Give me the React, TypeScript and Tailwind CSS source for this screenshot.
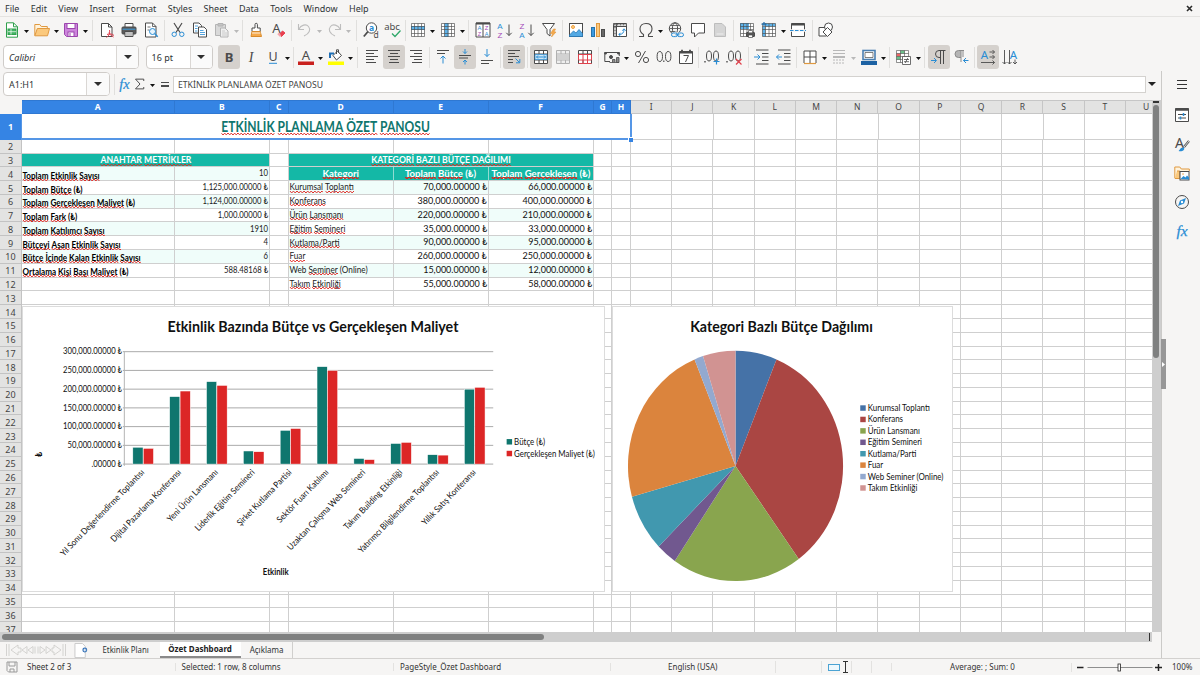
import type { ReactNode } from "react";
import clsx from "clsx";

const ink = "#4b4b4b";
const blue = "#2a8dd4";

/* ---------- toolbar primitives ---------- */

const Ico = ({ children, size = 16 }: { children: ReactNode; size?: number }) => (
  <svg width={size} height={size} viewBox="0 0 16 16" fill="none" stroke={ink} strokeWidth="1" className="shrink-0 overflow-visible">
    {children}
  </svg>
);

const Tool = ({ children, active }: { children: ReactNode; active?: boolean }) => (
  <button className={clsx("flex h-6 w-[22px] shrink-0 items-center justify-center rounded-[3px]", active && "bg-[#d5d1cd]")}>
    <Ico>{children}</Ico>
  </button>
);

const Arrow = ({ className = "w-[7.5px]", dim }: { className?: string; dim?: boolean }) => (
  <span className={clsx("flex shrink-0 items-center justify-center pt-[2px]", className)}>
    <svg width="5" height="3" viewBox="0 0 5 3">
      <path d="M0 0h5L2.5 3z" fill={dim ? "#b9b9b9" : "#111"} />
    </svg>
  </span>
);

const Sep = ({ className = "w-[5px]" }: { className?: string }) => (
  <span className={clsx("flex shrink-0 justify-center", className)}>
    <span className="h-[21px] w-px bg-[#e0dfdd]" />
  </span>
);

const Grid = ({ stroke = ink }: { stroke?: string }) => (
  <path d="M1.5 1.5h13v13h-13zM1.5 4.5h13M1.5 7.5h13M1.5 11.5h13M4.5 1.5v13M8 1.5v13M11.5 1.5v13" stroke={stroke} strokeWidth=".65" />
);

const Letter = ({ x, y, size, fill = ink, bold, tight, children }: { x: number; y: number; size: number; fill?: string; bold?: boolean; tight?: boolean; children: string }) => (
  <text
    x={x}
    y={y}
    fontSize={size}
    fill={fill}
    stroke="none"
    textAnchor="middle"
    fontWeight={bold ? 700 : 400}
    fontFamily={tight ? "Liberation Sans, sans-serif" : "Noto Sans, sans-serif"}
  >
    {children}
  </text>
);

const Lines = ({ rows }: { rows: number[][] }) => (
  <>
    {rows.map(([y, x1, x2]) => (
      <path key={y} d={`M${x1} ${y}H${x2}`} />
    ))}
  </>
);

const Fx = () => (
  <text x="8" y="12.5" textAnchor="middle" fontSize="15.5" fontStyle="italic" fill={blue} stroke={blue} strokeWidth=".25" fontFamily="Liberation Serif, serif">
    fx
  </text>
);

/* ---------- bars above the sheet ---------- */

const menus = ["File", "Edit", "View", "Insert", "Format", "Styles", "Sheet", "Data", "Tools", "Window", "Help"];

const MenuBar = () => (
  <div className="flex h-[17px] shrink-0 items-center border-b border-[#e4e3e1] pl-[5px] pr-[7px]">
    <div className="flex gap-[11.4px]">
      {menus.map((m) => (
        <span key={m}>{m}</span>
      ))}
    </div>
    <svg width="7" height="7" viewBox="0 0 7 7" className="ml-auto">
      <path d="M1 1l5 5M6 1L1 6" stroke="#2b2b2b" strokeWidth="1.6" />
    </svg>
  </div>
);

const StandardBar = () => (
  <div className="flex h-[27px] shrink-0 items-center pb-px pl-px">
    <Tool>
      <path d="M2.5.8h7l4 4v10.4h-11z" stroke="#2fa04c" fill="#fff" />
      <path d="M9.5.8v4h4" stroke="#2fa04c" />
      <rect x="4" y="7" width="8" height="5.5" fill="#43b565" stroke="#2fa04c" />
      <path d="M4 9.7h8M7 7v5.5" stroke="#fff" strokeWidth=".7" />
    </Tool>
    <Arrow />
    <Tool>
      <path d="M.8 13.5v-11h5l1.5 2h6v2" stroke="#e09940" fill="#fff3dc" />
      <path d="M.8 13.8L3.3 6.5h12.2l-2 7.3z" stroke="#e09940" fill="#fbc97d" />
    </Tool>
    <Arrow />
    <Tool>
      <path d="M1.5 1.5h13v13h-11l-2-2z" stroke="#9c46ad" fill="#cd85dc" />
      <rect x="4" y="1.5" width="8" height="5" fill="#fff" stroke="#9c46ad" />
      <rect x="5" y="10" width="6" height="4.5" fill="#fff" stroke="#9c46ad" />
      <path d="M7 11v3" stroke="#9c46ad" />
    </Tool>
    <Arrow />
    <Sep className="w-[6.5px]" />
    <Tool>
      <path d="M2.5 1.5h7L13 5v9.500H2.500z" fill="#fff" />
      <path d="M9.500 1.500V5H13" />
      <path d="M7.500 15.500c3-2 3.500-5 3-7.500M8 12.500c2.500-1 5-1 7 1M10 10.500c1 2.500 2.500 3.500 4.500 4.500" stroke="#e03b4b" />
    </Tool>
    <Tool>
      <path d="M4 5V1.500h8V5" fill="#fff" />
      <rect x="1" y="5" width="14" height="7" rx="1" fill="#5b5b5b" />
      <path d="M1.500 7.200h13" stroke="#3e9fe0" />
      <path d="M4 9.500h8v5H4z" fill="#fff" />
      <path d="M5 11h6M5 13h6" strokeWidth=".7" />
    </Tool>
    <Tool>
      <path d="M2.500 1h7L13 4.500V15H2.500z" fill="#fff" />
      <path d="M9.500 1v3.500H13M4.500 5h3M4.500 8h2" strokeWidth=".8" />
      <circle cx="9.500" cy="9.500" r="3" stroke={blue} fill="#e8f4fc" />
      <path d="M11.800 11.800l3 3" stroke={blue} strokeWidth="1.300" />
    </Tool>
    <Sep />
    <Tool>
      <path d="M4 1l6 9.500M12 1L6 10.500" strokeWidth="1.200" />
      <circle cx="4.200" cy="12.300" r="2.200" stroke={blue} />
      <circle cx="11.800" cy="12.300" r="2.200" stroke={blue} />
    </Tool>
    <Tool>
      <path d="M1.500 1h5.500l2.500 2.500V11h-8z" fill="#fff" />
      <path d="M6.500 5h5.500l2.500 2.500V15h-8z" fill="#fff" />
      <path d="M3 4h3M3 6.500h2.500M3 9h2.500M8 8.500h3.500M8 10.500h5M8 12.500h5" stroke={blue} strokeWidth=".8" />
    </Tool>
    <Tool>
      <path d="M1.500 2.500h10v11h-10z" fill="#d9d9d9" stroke="#b4b4b4" />
      <path d="M4 1.500h5v2.500H4z" fill="#c4c4c4" stroke="#b4b4b4" />
      <path d="M6.500 6h4.500l3 3v6H6.500z" fill="#efefef" stroke="#b4b4b4" />
      <path d="M8 9h3M8 11h5M8 13h5" stroke="#c4c4c4" strokeWidth=".8" />
    </Tool>
    <Arrow className="w-[7px]" dim />
    <Sep />
    <Tool>
      <path d="M7 6V2.500a1.200 1.200 0 012.400 0V6h2.800v3.500H4V6z" fill="#fff" />
      <path d="M4 9.500h8.200l1.300 5H3z" fill="#f5a94b" stroke="#d98b2b" />
      <path d="M4 11h8.500" stroke="#fff" strokeWidth=".8" />
    </Tool>
    <Tool>
      <Letter x={6.500} y={11} size={13}>A</Letter>
      <path d="M9 12.500l3.500-3.500 2.500 2-3.500 3.500z" fill="#e8404f" stroke="#e8404f" />
      <path d="M8 11.500l2.500 2.500" stroke="#f6a5ac" strokeWidth="2" />
    </Tool>
    <Sep className="w-[4.5px]" />
    <Tool>
      <path d="M1.500 2v5.500h5.500M1.800 7.200C4 3 9 1.500 11.500 4.500s1 7-4.500 9.500" stroke="#bdbdbd" strokeWidth="1.100" />
    </Tool>
    <Arrow dim />
    <Tool>
      <path d="M14.500 2v5.500H9M14.200 7.200C12 3 7 1.500 4.500 4.500s-1 7 4.500 9.500" stroke="#bdbdbd" strokeWidth="1.100" />
    </Tool>
    <Arrow dim />
    <Sep className="w-[7px]" />
    <Tool>
      <circle cx="8.500" cy="6" r="5.200" fill="#fff" />
      <path d="M5 9.500L.8 14.500" strokeWidth="1.800" />
      <Letter x={8.500} y={9} size={8.500} fill={blue} bold>a</Letter>
      <Letter x={13} y={15.500} size={8.500}>d</Letter>
    </Tool>
    <Tool>
      <Letter x={7} y={7.500} size={9.500}>abc</Letter>
      <path d="M7 11.500l3 3 5.500-6" stroke="#2fa86a" strokeWidth="1.300" />
    </Tool>
    <Sep className="w-[3.5px]" />
    <Tool>
      <path d="M1.500 1.500h13v13h-13z" fill="#fff" stroke="none" />
      <rect x="1" y="4" width="14" height="4" fill="#5fb3ea" stroke="none" />
      <Grid />
    </Tool>
    <Arrow />
    <Tool>
      <path d="M1.500 1.500h13v13h-13z" fill="#fff" stroke="none" />
      <rect x="4.500" y="1" width="4" height="14" fill="#5fb3ea" stroke="none" />
      <Grid />
    </Tool>
    <Arrow />
    <Sep className="w-[5.5px]" />
    <Tool>
      <path d="M1 1h14v14H1zM8 1v14" fill="#fff" />
      <path d="M1 1.500h14" strokeWidth="2" />
      <Letter x={4.500} y={7.900} size={5.900} fill={blue} tight>A</Letter>
      <Letter x={11.500} y={7.900} size={5.900} fill="#a349b8" tight>Z</Letter>
      <Letter x={4.500} y={14.300} size={5.500} fill="#a349b8" tight>Z</Letter>
      <Letter x={11.500} y={14.300} size={5.500} fill={blue} tight>A</Letter>
    </Tool>
    <Tool>
      <Letter x={3} y={6.500} size={8} fill={blue} tight>A</Letter>
      <Letter x={3} y={15.700} size={8} fill="#a349b8" tight>Z</Letter>
      <path d="M12 2.500v11M9.300 10.800l2.700 2.700 2.700-2.700" />
    </Tool>
    <Tool>
      <Letter x={3} y={6.500} size={8} fill="#a349b8" tight>Z</Letter>
      <Letter x={3} y={15.700} size={8} fill={blue} tight>A</Letter>
      <path d="M12 2.500v11M9.300 10.800l2.700 2.700 2.700-2.700" />
    </Tool>
    <Tool>
      <path d="M1.500 1.500h12l-4.500 6v6.500l-3-2.500v-4z" fill="#fff" />
      <path d="M12.500 7l-3 4.500h2l-1 3.500 4.500-5h-2l1.500-3z" fill="#f5a94b" stroke="#e09940" strokeWidth=".6" />
    </Tool>
    <Sep className="w-[5.5px]" />
    <Tool>
      <rect x="1.500" y="1.500" width="13" height="13" fill="#fff" />
      <circle cx="5" cy="5" r="1.500" stroke="#f0a040" fill="#fbd08a" />
      <path d="M1.500 13l4-4 2.500 2 3-3.500 3.500 4v3h-13z" fill="#53a9e4" stroke="#2778b8" strokeWidth=".8" />
    </Tool>
    <Tool>
      <rect x="1.500" y="5.500" width="3" height="9" fill="#3c9ae0" stroke="#2573ad" />
      <rect x="6.500" y="1.500" width="3" height="13" fill="#fbc97d" stroke="#e09940" />
      <rect x="11.500" y="7.500" width="3" height="7" fill="#686868" />
    </Tool>
    <Tool>
      <path d="M1.500 1.500h13v13h-13zM1.500 4.500h13M4.500 1.500v13" fill="#fff" />
      <path d="M1.500 2.800h13M3 1.500v13" stroke="#777" strokeWidth="1.600" strokeDasharray="2 1" />
      <path d="M7 12.500c3.500 0 5-2 5-5M8.500 10.800L6.800 12.500l1.700 1.700M10.300 8.700L12 6.800l1.700 1.900" stroke={blue} />
    </Tool>
    <Sep className="w-1" />
    <Tool>
      <path d="M1 14.500h4.500v-2C3 11 2 9 2 6.800 2 3.500 4.500 1.500 8 1.500s6 2 6 5.300c0 2.200-1 4.200-3.500 5.700v2H15" strokeWidth="1.100" />
    </Tool>
    <Arrow />
    <Tool>
      <circle cx="7" cy="6.500" r="5.700" />
      <ellipse cx="7" cy="6.500" rx="2.600" ry="5.700" />
      <path d="M1.300 6.500h11.400M2.500 3.500h9M2.500 9.500h5" strokeWidth=".8" />
      <path d="M4 10.500h12v5H4z" fill="#f6f5f4" stroke="none" />
      <rect x="3.500" y="11" width="6" height="3.600" rx="1.800" stroke={blue} />
      <rect x="9.500" y="11" width="6" height="3.600" rx="1.800" stroke={blue} />
      <path d="M7.500 12.800h4" stroke={blue} />
    </Tool>
    <Tool>
      <path d="M1.500 1.500h13v9.500H8.500l-4 4V11h-3z" fill="#fff" />
    </Tool>
    <Tool>
      <path d="M2.500 1.500h7.500l3.500 3.500v9.500h-11z" fill="#d5d5d5" stroke="#bdbdbd" />
      <path d="M4.500 12h7" stroke="#eee" />
    </Tool>
    <Sep className="w-[5.5px]" />
    <Tool>
      <path d="M1.500 1.500h13v13h-13z" fill="#fff" stroke="none" />
      <rect x="1" y="1" width="9" height="6" fill="#5fb3ea" stroke="none" />
      <Grid />
      <rect x="7.500" y="10.500" width="8" height="4" rx=".5" fill="#555" />
      <path d="M9.500 10.500v-2h4v2M9.500 13h4v2.500h-4z" fill="#fff" strokeWidth=".7" />
    </Tool>
    <Tool>
      <path d="M1.500 1.500h13v13h-13z" fill="#fff" stroke="none" />
      <rect x="4.500" y="1.500" width="10" height="3" fill="#5fb3ea" stroke="none" />
      <rect x="1.500" y="5" width="3" height="9.500" fill="#5fb3ea" stroke="none" />
      <Grid />
      <path d="M3 0v4.500M.5 2.200h5" stroke="#1d6fb0" strokeWidth="1.200" />
    </Tool>
    <Arrow className="w-[7px]" />
    <Tool>
      <path d="M1.500 1.500h13v13h-13z" fill="#fff" />
      <path d="M1.500 2.500h13" strokeWidth="2" />
      <path d="M0 8.500h16" stroke="#f6f5f4" strokeWidth="2.500" />
      <path d="M0 8.500h16" stroke={blue} strokeDasharray="3.500 1.500" />
    </Tool>
    <Sep className="w-1.5" />
    <Tool>
      <path d="M1 5.500h7.500v8.500H1z" fill="#fff" />
      <circle cx="10.500" cy="5" r="4" fill="#fff" />
      <path d="M9.500 5.500l4.500 4.500-4.500 4.500L5 10z" fill="#fff" />
    </Tool>
  </div>
);

const Combo = ({ className, boxClass, italic, children }: { className: string; boxClass: string; italic?: boolean; children: string }) => (
  <div className={clsx("flex shrink-0 items-stretch overflow-hidden rounded-[4px] border border-[#cfccc9] bg-white", className)}>
    <span className={clsx("flex flex-1 items-center pl-[5px]", italic && "italic")}>{children}</span>
    <span className={clsx("flex items-center justify-center border-l border-[#dad7d4] bg-[#fafafa]", boxClass)}>
      <svg width="8" height="4" viewBox="0 0 8 4">
        <path d="M0 0h8L4 4z" fill="#2f2f2f" />
      </svg>
    </span>
  </div>
);

const FormatBar = () => (
  <div className="flex h-[27px] shrink-0 items-center pb-px pl-[3px]">
    <Combo className="h-6 w-[136px]" boxClass="w-[22px]" italic>Calibri</Combo>
    <span className="w-[6.5px]" />
    <Combo className="h-6 w-[67px]" boxClass="w-[22px]">16 pt</Combo>
    <span className="w-[5px]" />
    <Tool active><Letter x={8} y={12.5} size={13} bold>B</Letter></Tool>
    <Tool>
      <text x="8" y="12.500" textAnchor="middle" fontSize="14" fontStyle="italic" fill={ink} stroke="none" fontFamily="Liberation Serif, serif">I</text>
    </Tool>
    <Tool>
      <Letter x={8} y={11.5} size={12.5}>U</Letter>
      <path d="M4 14.300h8" stroke={blue} />
    </Tool>
    <Arrow />
    <Sep className="w-1" />
    <Tool>
      <Letter x={8} y={10.5} size={13}>A</Letter>
      <rect x="0" y="12.500" width="16" height="3.500" fill="#c9211e" stroke="none" />
    </Tool>
    <Arrow />
    <Tool>
      <rect x="0" y="12.500" width="16" height="3.500" fill="#ffff00" stroke="none" />
      <path d="M5 6.500l4.500-4.500 4 4.500-5 4.500z" fill="#fff" />
      <path d="M8.500 5V.8h2v3" />
      <path d="M2 9V4.500h4" stroke="#1f6fb5" strokeWidth="2" />
    </Tool>
    <Arrow className="w-2" />
    <Sep className="w-1.5" />
    <Tool><Lines rows={[[1.5, 2, 14], [4.5, 2, 10], [7.5, 2, 14], [10.5, 2, 10], [13.5, 2, 12]]} /></Tool>
    <Tool active><Lines rows={[[1.5, 2, 14], [4.5, 4, 12], [7.5, 2, 14], [10.5, 4, 12], [13.5, 3, 13]]} /></Tool>
    <Tool><Lines rows={[[1.5, 2, 14], [4.5, 6, 14], [7.5, 2, 14], [10.5, 6, 14], [13.5, 4, 14]]} /></Tool>
    <Sep />
    <Tool>
      <Lines rows={[[1.5, 2, 14], [4.5, 2, 10]]} />
      <path d="M8 14.500V7M5.500 9.500L8 7l2.500 2.500" stroke={blue} />
    </Tool>
    <Tool active>
      <Lines rows={[[6.5, 2, 14], [9, 2, 11]]} />
      <path d="M8 0v4.500M6 2.500l2 2 2-2M8 15.500V11M6 13l2-2 2 2" stroke={blue} />
    </Tool>
    <Tool>
      <Lines rows={[[11.5, 2, 14], [14.5, 2, 10]]} />
      <path d="M8 0v7.500M5.500 5L8 7.500 10.500 5" stroke={blue} />
    </Tool>
    <Sep className="w-[5.5px]" />
    <Tool active>
      <Lines rows={[[1.5, 2, 14], [4.5, 2, 9], [7.5, 2, 13], [10.5, 2, 7], [13.5, 2, 7]]} />
      <path d="M9.500 9.500l4 4M13.800 10v3.800H10" stroke={blue} />
    </Tool>
    <Sep />
    <Tool active>
      <path d="M1.500 1.500h13v13h-13zM1.500 5h13M1.500 11h13M6 1.500V5M10.500 1.500V5M6 11v3.500M10.500 11v3.500" fill="#fff" />
      <path d="M2 5.500h12v5H2z" fill="#cfe8f8" stroke={blue} strokeWidth=".7" />
      <path d="M3.500 8h9M5 6.500L3.500 8 5 9.500M11 6.500L12.500 8 11 9.500" stroke={blue} />
    </Tool>
    <Tool>
      <path d="M1.500 1.500h13v13h-13zM1.500 5h13M1.500 11h13M6 1.500V5M10.500 1.500V5M6 11v3.500M10.500 11v3.500" stroke="#b0b0b0" fill="#eee" />
      <path d="M2 5.500h12v5H2z" fill="#d2d2d2" stroke="none" />
    </Tool>
    <Tool>
      <path d="M1.500 1.500h13v13h-13zM1.500 5h13M6 1.500V5M10.500 1.500V5M6 11v3.500M10.500 11v3.500" fill="#fff" />
      <path d="M1.500 5.500h13v5.500h-13zM6 5.500V14M10.500 5.500V14M1.500 14.500h13" stroke="#e0414c" />
    </Tool>
    <Sep className="w-[4.5px]" />
    <Tool>
      <path d="M6 12.500H.8V3.500h14.500V7" />
      <path d="M.8 3.500h1.500V5H.8zM13.700 3.500h1.500V5h-1.500z" fill={ink} />
      <circle cx="7" cy="8" r="1.500" fill={ink} />
      <path d="M8.500 13.500V10.500h2.500v3M12.500 13.500V8.500h2.500v5zM5.500 13.500h9.500" fill="#8b8b8b" strokeWidth=".8" />
    </Tool>
    <Arrow className="w-2" />
    <Tool>
      <circle cx="4" cy="5" r="2.600" />
      <circle cx="12" cy="11" r="2.600" />
      <path d="M11.500 2L4.500 14" />
    </Tool>
    <Tool>
      <ellipse cx="3.800" cy="7.500" rx="2.700" ry="5" />
      <ellipse cx="12.200" cy="7.500" rx="2.700" ry="5" />
      <path d="M7.800 11.500v1.500" strokeWidth="1.200" />
    </Tool>
    <Tool>
      <path d="M1.500 2.500h13v12h-13z" fill="#fff" />
      <path d="M1.500 3.500h13M4 .8v3M12 .8v3" strokeWidth="1.800" />
      <path d="M5.500 6.500h5L7.500 13" />
    </Tool>
    <Sep className="w-[4.5px]" />
    <Tool>
      <path d="M1 12v1.500" strokeWidth="1.400" />
      <ellipse cx="5" cy="7" rx="2.500" ry="5" />
      <ellipse cx="12" cy="7" rx="2.500" ry="5" />
      <path d="M12.500 9.500v6M9.500 12.500h6" stroke={blue} strokeWidth="1.200" />
    </Tool>
    <Tool>
      <path d="M1 12v1.500" strokeWidth="1.400" />
      <ellipse cx="5" cy="7" rx="2.500" ry="5" />
      <ellipse cx="12" cy="7" rx="2.500" ry="5" />
      <path d="M10 10l5.500 5.500M15.500 10L10 15.500" stroke="#e0414c" strokeWidth="1.200" />
    </Tool>
    <Sep className="w-1.5" />
    <Tool>
      <Lines rows={[[1, 2, 14.5], [4.5, 8, 14.5], [8, 8, 14.5], [11.5, 8, 14.5], [15, 2, 14.5]]} />
      <path d="M0 8h5.500M3.500 5.500L6 8l-2.500 2.500" stroke={blue} />
    </Tool>
    <Tool>
      <Lines rows={[[1, 2, 14.5], [4.5, 8, 14.5], [8, 8, 14.5], [11.5, 8, 14.5], [15, 2, 14.5]]} />
      <path d="M6 8H.5M3 5.500L.5 8 3 10.500" stroke={blue} />
    </Tool>
    <Sep className="w-[3.5px]" />
    <Tool>
      <path d="M2 14V2h12v12M8 2v12M2 8h12" fill="#fff" />
      <path d="M2 14.500h12" stroke="#e09940" strokeWidth="1.200" />
    </Tool>
    <Arrow />
    <Tool>
      <path d="M2 1.500h12M2 4.500h12" stroke="#b8b8b8" strokeWidth="1" />
      <path d="M2 8h12" stroke="#b8b8b8" strokeWidth="2" />
      <path d="M2 11h12M2 14h12" stroke="#b8b8b8" strokeDasharray="2 1" />
    </Tool>
    <Arrow dim />
    <Tool>
      <rect x="2" y="1.500" width="12" height="9" fill="#fff" stroke="#4a7fb2" strokeWidth="1.600" />
      <path d="M4 3.500h8v5H4z" strokeWidth=".7" />
      <rect x="0" y="12" width="16" height="4" fill="#1d62a3" stroke="none" />
    </Tool>
    <Arrow />
    <Sep />
    <Tool>
      <path d="M1 1h13v12H1z" fill="#fff" stroke="none" />
      <path d="M5.500 1.500h4v3h-4z" fill="#6cc08b" stroke="none" />
      <path d="M1.500 4.500h4v3h-4z" fill="#e66" stroke="none" />
      <path d="M1.500 7.500h4v3h-4z" fill="#6cc08b" stroke="none" />
      <path d="M1.500 1.500h12v12h-12zM1.500 4.500h12M1.500 7.500h12M1.500 10.500h12M5.500 1.500v12M9.500 1.500v12" strokeWidth=".6" />
      <path d="M7.500 7.500h8v8h-8z" fill="#fff" strokeWidth=".8" />
      <path d="M9 10.500h5M9 12.700h5M12.800 9l-2.600 5" strokeWidth=".8" />
    </Tool>
    <Arrow className="w-2" />
    <Sep className="w-[5.5px]" />
    <Tool active>
      <path d="M14.500 1.500H8a3.500 3.500 0 000 7h1.500M9.500 1.500V15M12.500 1.500V15" />
      <path d="M0 11.500h5M3 9l2.500 2.500L3 14" stroke={blue} />
    </Tool>
    <Tool>
      <path d="M8 1.500H5.500a3.500 3.500 0 000 7H8z" fill="#b5b5b5" stroke="none" />
      <path d="M11 1.500H5.500a3.500 3.500 0 000 7H8M8 1.500V13M10 1.500V8" stroke="#8a8a8a" />
      <path d="M15.500 11.500h-5M13 9l-2.500 2.500L13 14" stroke={blue} />
    </Tool>
    <Sep className="w-[5.5px]" />
    <Tool active>
      <Letter x={4.500} y={9.500} size={11.500} fill={blue}>A</Letter>
      <path d="M9.500 3h5M12.500 1l2 2-2 2M9.500 8h5M12.500 6l2 2-2 2M1 13.500h13.500M12.500 11.500l2 2-2 2" strokeWidth=".9" />
    </Tool>
    <Tool>
      <Letter x={11.500} y={9.500} size={11.500} fill={blue}>A</Letter>
      <path d="M2.500 1v14M.5 13l2 2 2-2M7.500 1v14M5.500 13l2 2 2-2M13 10.500V15M11 13l2 2 2-2" strokeWidth=".9" />
    </Tool>
  </div>
);

const FormulaBar = () => (
  <div className="flex h-[29px] shrink-0 items-center pb-[3px] pl-[3px]">
    <Combo className="h-6 w-[107px]" boxClass="w-[23px]">A1:H1</Combo>
    <Sep className="w-2" />
    <span className="flex w-[12px] justify-center"><Ico size={15}><Fx /></Ico></span>
    <span className="flex w-[19px] justify-center pl-px">
      <Ico size={12}><path d="M13 4V1.500H2L8 8l-6 6.500h11V12" strokeWidth="1.300" /></Ico>
    </span>
    <Arrow className="w-[7px]" />
    <span className="flex w-[17px] flex-col items-center gap-[2px]">
      <span className="h-[1.500px] w-2 bg-[#4b4b4b]" />
      <span className="h-[1.500px] w-2 bg-[#4b4b4b]" />
    </span>
    <div className="flex h-[17px] flex-1 items-center border border-[#d4d2cf] bg-white pl-1">
      <span className="origin-left scale-x-[0.96] text-[#444]">ETKİNLİK PLANLAMA ÖZET PANOSU</span>
    </div>
    <span className="flex w-[15px] justify-center pr-[3px]">
      <svg width="8" height="4" viewBox="0 0 8 4"><path d="M0 0h8L4 4z" fill="#222" /></svg>
    </span>
  </div>
);

/* ---------- spreadsheet ---------- */

const columns: [string, number][] = [
  ["A", 152.5], ["B", 95.5], ["C", 18.5], ["D", 105], ["E", 95.2], ["F", 105], ["G", 18.6], ["H", 18.700],
  ["I", 41.25], ["J", 41.25], ["K", 41.25], ["L", 41.25], ["M", 41.25], ["N", 41.25], ["O", 41.25],
  ["P", 41.25], ["Q", 41.25], ["R", 41.25], ["S", 41.25], ["T", 41.25], ["U", 41.25],
];

const metrics: [string, string][] = [
  ["Toplam Etkinlik Sayısı", "10"],
  ["Toplam Bütçe (₺)", "1,125,000.00000 ₺"],
  ["Toplam Gerçekleşen Maliyet (₺)", "1,124,000.00000 ₺"],
  ["Toplam Fark (₺)", "1,000.00000 ₺"],
  ["Toplam Katılımcı Sayısı", "1910"],
  ["Bütçeyi Aşan Etkinlik Sayısı", "4"],
  ["Bütçe İçinde Kalan Etkinlik Sayısı", "6"],
  ["Ortalama Kişi Başı Maliyet (₺)", "588.48168 ₺"],
];

const categories = [
  { name: "Kurumsal Toplantı", budget: 70, actual: 66, color: "#4572a7" },
  { name: "Konferans", budget: 380, actual: 400, color: "#aa4643" },
  { name: "Ürün Lansmanı", budget: 220, actual: 210, color: "#89a54e" },
  { name: "Eğitim Semineri", budget: 35, actual: 33, color: "#71588f" },
  { name: "Kutlama/Parti", budget: 90, actual: 95, color: "#4198af" },
  { name: "Fuar", budget: 260, actual: 250, color: "#db843d" },
  { name: "Web Seminer (Online)", budget: 15, actual: 12, color: "#93a9cf" },
  { name: "Takım Etkinliği", budget: 55, actual: 58, color: "#d19392" },
];

const knownWords = ["(₺)", "Web", "(Online)"];

// the zigzag is the top half of a tile of crossed diagonals
const wave =
  "relative inline-block after:absolute after:inset-x-0 after:-bottom-px after:h-[2px] after:bg-[length:4px_4px] after:bg-[linear-gradient(45deg,transparent_38%,#e0241f_38%,#e0241f_62%,transparent_62%),linear-gradient(135deg,transparent_38%,#e0241f_38%,#e0241f_62%,transparent_62%)]";

const Spell = ({ text }: { text: string }) => (
  <>
    {text.split(" ").map((word, i) => (
      <span key={i}>
        {i > 0 && " "}
        <span className={clsx(!knownWords.includes(word) && wave)}>{word}</span>
      </span>
    ))}
  </>
);

type CellDef = { span?: number; className?: string; content?: ReactNode };

const lira = (k: number) => `${k},000.00000 ₺`;

const teal = "justify-center border-[#14b8a6] bg-[#14b8a6] text-white font-bold";

const cellFor = (row: number, col: number): CellDef => {
  if (row === 1 && col === 0)
    return {
      span: 8,
      className: "justify-center pt-px",
      content: <span className="inline-block scale-x-[0.83] text-[14.5px] font-bold text-[#0f766e]"><Spell text="ETKİNLİK PLANLAMA ÖZET PANOSU" /></span>,
    };
  if (row === 3 && col === 0)
    return { span: 2, className: teal, content: <span className="inline-block scale-x-[0.93] text-[9.300px]"><Spell text="ANAHTAR METRİKLER" /></span> };
  if (row === 3 && col === 3)
    return { span: 3, className: teal, content: <span className="inline-block scale-x-[0.93] text-[9.300px]"><Spell text="KATEGORİ BAZLI BÜTÇE DAĞILIMI" /></span> };
  if (row === 4 && col >= 3 && col <= 5)
    return {
      className: clsx(teal, col < 5 && "border-r-[#8fdcd2]"),
      content: <span className="inline-block scale-x-[1.03] text-[9.300px]"><Spell text={["Kategori", "Toplam Bütçe (₺)", "Toplam Gerçekleşen (₺)"][col - 3]} /></span>,
    };
  const metric = metrics[row - 4];
  if (metric && col < 2) {
    const zebra = row % 2 === 0 && "bg-[#f0fdfa]";
    return col === 0
      ? { className: clsx("justify-start pt-[3px]", zebra), content: <span className="inline-block origin-left scale-x-[0.9] pl-[0.500px] text-[9px] font-bold text-black"><Spell text={metric[0]} /></span> }
      : { className: clsx("justify-end", zebra), content: <span className="inline-block origin-right scale-x-[0.9] pr-px text-[8.600px] text-[#222]">{metric[1]}</span> };
  }
  const cat = categories[row - 5];
  if (cat && col >= 3 && col <= 5) {
    const zebra = row % 2 === 1 && "bg-[#f0fdfa]";
    return col === 3
      ? { className: clsx("justify-start pb-px", zebra), content: <span className="inline-block origin-left scale-x-[0.89] pl-[0.500px] text-[9.200px] text-[#222]"><Spell text={cat.name} /></span> }
      : { className: clsx("justify-end pb-px", zebra), content: <span className="inline-block origin-right scale-x-[0.94] pr-px text-[9.600px] text-[#111]">{lira(col === 4 ? cat.budget : cat.actual)}</span> };
  }
  return {};
};

const Row = ({ n }: { n: number }) => {
  const cells: ReactNode[] = [];
  for (let c = 0; c < columns.length; ) {
    const { span = 1, className, content } = cellFor(n, c);
    const width = columns.slice(c, c + span).reduce((sum, [, w]) => sum + w, 0);
    cells.push(
      <div key={c} style={{ width }} className={clsx("flex shrink-0 items-center whitespace-nowrap border-b border-r border-[#cfcfcf] leading-none", className)}>
        {content}
      </div>
    );
    c += span;
  }
  return (
    <div className={clsx("flex shrink-0", n === 1 ? "h-[25.800px]" : "h-[13.790px]")}>
      <div
        className={clsx(
          "flex w-[22px] shrink-0 items-center justify-center border-b border-r pt-px font-[Noto_Sans,sans-serif] text-[9px] leading-none",
          n === 1 ? "border-[#3584e4] bg-[#3584e4] font-bold text-white" : "border-[#c3c3c3] bg-[#e3e3e2] text-[#444]"
        )}
      >
        {n}
      </div>
      {cells}
    </div>
  );
};

const ColumnHeads = () => (
  <div className="flex h-[14px] shrink-0 font-[Noto_Sans,sans-serif] text-[8.500px] leading-none">
    <div className="w-[22px] shrink-0 bg-[#f6f5f4]" />
    {columns.map(([name, width], i) => (
      <div
        key={name}
        style={{ width }}
        className={clsx(
          "flex shrink-0 items-center justify-center border-r border-b border-t",
          i < 8 ? "border-[#2f78d2] bg-[#3584e4] font-bold text-white" : "border-[#c6c6c6] bg-[#e3e3e2] text-[#444]"
        )}
      >
        {name}
      </div>
    ))}
  </div>
);

const events: [string, number, number][] = [
  ["Yıl Sonu Değerlendirme Toplantısı", 45, 42],
  ["Dijital Pazarlama Konferansı", 180, 195],
  ["Yeni Ürün Lansmanı", 220, 210],
  ["Liderlik Eğitim Semineri", 35, 33],
  ["Şirket Kutlama Partisi", 90, 95],
  ["Sektör Fuarı Katılımı", 260, 250],
  ["Uzaktan Çalışma Web Semineri", 15, 12],
  ["Takım Building Etkinliği", 55, 58],
  ["Yatırımcı Bilgilendirme Toplantısı", 25, 24],
  ["Yıllık Satış Konferansı", 200, 205],
];

const BarChart = () => {
  const base = 158.2;
  const y = (v: number) => base - (v / 300) * 113.2;
  return (
    <svg width="583" height="286" viewBox="0 0 583 286" fontSize="8.8" fill="#111" className="absolute left-[22px] top-[206px] border border-[#dcdcdc] bg-white">
      <text x="291" y="25" textAnchor="middle" fontSize="15" fontWeight="700" textLength="293" lengthAdjust="spacingAndGlyphs">
        Etkinlik Bazında Bütçe vs Gerçekleşen Maliyet
      </text>
      {[0, 50, 100, 150, 200, 250, 300].map((v) => (
        <g key={v}>
          <path d={`M99.500 ${y(v)}H472.500`} stroke="#a9a9a9" />
          <text transform={`translate(98.700 ${y(v) + 2.7}) scale(.88 1)`} textAnchor="end">
            {v ? lira(v) : ".00000 ₺"}
          </text>
        </g>
      ))}
      <path d="M101 45V160" stroke="#b3b3b3" />
      {events.map(([name, budget, actual], i) => {
        const cx = 101.3 + 37.1 * (i + 0.5);
        return (
          <g key={name}>
            <rect x={cx - 10.3} y={y(budget)} width="10.3" height={base - y(budget)} fill="#0f766e" stroke="#fff" strokeWidth=".5" />
            <rect x={cx + 0.2} y={y(actual)} width="10.3" height={base - y(actual)} fill="#dc2626" stroke="#fff" strokeWidth=".5" />
            <text transform={`translate(${cx + 1.8} 167) rotate(-46) scale(.91 1)`} textAnchor="end">
              {name}
            </text>
          </g>
        );
      })}
      <text transform="translate(18.500 151) rotate(-90)" fontWeight="700" fontSize="9">₺</text>
      <text x="253.500" y="269.500" textAnchor="middle" fontWeight="700" textLength="26" lengthAdjust="spacingAndGlyphs">Etkinlik</text>
      <rect x="486" y="133" width="5.500" height="5.500" fill="#0f766e" />
      <text transform="translate(493.500 139) scale(.91 1)">Bütçe (₺)</text>
      <rect x="486" y="144.800" width="5.500" height="5.500" fill="#dc2626" />
      <text transform="translate(493.500 151) scale(.9 1)">Gerçekleşen Maliyet (₺)</text>
    </svg>
  );
};

const PieChart = () => {
  const total = categories.reduce((s, c) => s + c.budget, 0);
  const point = (v: number) => {
    const a = (v / total) * Math.PI * 2;
    return `${123.2 + 108.3 * Math.sin(a)} ${160 - 116 * Math.cos(a)}`;
  };
  let sum = 0;
  return (
    <svg width="341" height="286" viewBox="0 0 341 286" fontSize="8.8" fill="#111" className="absolute left-[612px] top-[206px] border border-[#dcdcdc] bg-white">
      <text x="169.500" y="25" textAnchor="middle" fontSize="15" fontWeight="700" textLength="184" lengthAdjust="spacingAndGlyphs">
        Kategori Bazlı Bütçe Dağılımı
      </text>
      {categories.map((c, i) => {
        const from = point(sum);
        sum += c.budget;
        return (
          <g key={c.name}>
            <path d={`M123.200 160L${from}A108.300 116 0 0 1 ${point(sum)}Z`} fill={c.color} />
            <rect x="248.800" y={99 + i * 11.5} width="5.500" height="5.500" fill={c.color} />
            <text transform={`translate(256.300 ${104.5 + i * 11.55}) scale(.91 1)`}>{c.name}</text>
          </g>
        );
      })}
    </svg>
  );
};

const Sheet = () => (
  <div className="flex h-[532px] shrink-0">
    <div className="relative flex w-[1152px] flex-col overflow-hidden bg-white font-[Lato,sans-serif]">
      <ColumnHeads />
      {Array.from({ length: 37 }, (_, i) => (
        <Row key={i} n={i + 1} />
      ))}
      {/* selection outline with its fill handle */}
      <div className="absolute left-[21px] top-[14px] h-[26px] w-[610.500px] border-b-2 border-l border-r-2 border-[#5596e6]" />
      <div className="absolute left-[628px] top-[37px] size-[5px] border-l border-t border-white bg-[#3584e4]" />
      <BarChart />
      <PieChart />
    </div>
    <div className="flex flex-1 flex-col items-center bg-[#cecece] pr-[1.500px]">
      <span className="mt-px h-[1.500px] w-1.5 bg-[#333]" />
      <span className="mt-[2.500px] h-[253px] w-[5.500px] rounded-full bg-[#7f8080]" />
    </div>
  </div>
);

const SheetTabs = () => (
  <div className="flex h-4 items-stretch text-[8.300px]">
    <span className="flex w-[74px] items-center pl-[5px]">
      <svg width="62" height="14" viewBox="0 0 62 14" fill="none" stroke="#cbcac8">
        <path d="M1.500 1v12M4 1v12M13 2L6 7l7 5V9h3V5h-3zM22 3.500l-5 3.500 5 3.500zM28 3.500L23 7l5 3.500zM30 3.500v7M33 3.500v7M35 3.500L40 7l-5 3.500zM41 3.500L46 7l-5 3.500zM49 2l7 5-7 5V9h-2V5h2zM58 1v12M60.500 1v12" strokeWidth=".8" />
      </svg>
    </span>
    <span className="flex w-[18px] items-center">
      <Ico size={15}>
        <path d="M1 .5h8l3 3v12H1z" fill="#fff" stroke="#c9c9c9" />
        <circle cx="11.500" cy="7.500" r="2.600" fill="#3572b8" stroke="none" />
        <path d="M11.500 6v3M10 7.500h3" stroke="#fff" />
      </Ico>
    </span>
    <span className="flex w-[68px] items-center justify-center"><span className="scale-x-[0.94]">Etkinlik Planı</span></span>
    <span className="flex w-[81px] items-center justify-center whitespace-nowrap border-b-2 border-[#8a8a8a] bg-white font-bold text-[#222]">
      <span className="inline-block scale-x-[0.96]">Özet Dashboard</span>
    </span>
    <span className="flex w-[52px] items-center justify-center border-r border-[#d0cfcd]"><span className="scale-x-[0.96]">Açıklama</span></span>
  </div>
);

const Sidebar = () => (
  <div className="relative flex w-[39px] shrink-0 flex-col items-center border-l border-[#cbcac8] pl-px pt-[6px]">
    <div className="flex h-[15px] flex-col justify-center gap-[2.500px]">
      <span className="h-[1.500px] w-[10px] bg-[#333]" />
      <span className="h-[1.500px] w-[10px] bg-[#333]" />
      <span className="h-[1.500px] w-[10px] bg-[#333]" />
    </div>
    <div className="mt-[15px] flex flex-col gap-[13px]">
      <Ico>
        <path d="M1.500 1.500h13v13h-13z" fill="#fff" />
        <path d="M1.500 2.500h13" strokeWidth="2.500" />
        <path d="M4 7.500h8M4 11h8" />
        <path d="M9.500 6v3M6.500 9.500v3" stroke={blue} strokeWidth="1.500" />
      </Ico>
      <Ico>
        <Letter x={5.500} y={12} size={14}>A</Letter>
        <path d="M15 5l-5 6" strokeWidth="2.200" />
        <path d="M15 5l-5 6" stroke="#fff" strokeWidth=".8" />
        <path d="M4.500 15c1-.500 2-3.500 4-3.500s2.500 1.500 1 2.800-3.500 1-5 .7z" fill={blue} stroke="none" />
      </Ico>
      <Ico>
        <path d="M.8 13V2h5l1.500 2h8v2" stroke="#e09940" fill="#fff3dc" />
        <path d="M.8 13.500h5V6H3" stroke="#e09940" fill="#fbc97d" />
        <rect x="6" y="6.500" width="9" height="8.500" fill="#fff" />
        <path d="M6.500 14l3-3 2 1.500 1.500-2 2 2v2z" fill={blue} stroke="none" />
        <circle cx="9" cy="9" r=".8" fill="#f0a040" stroke="none" />
      </Ico>
      <Ico>
        <circle cx="8" cy="8" r="6.500" />
        <path d="M12 4l-2 5.500L4 12l2-5.500z" fill={blue} stroke="none" />
        <circle cx="8" cy="8" r="1.200" fill="#fff" stroke="none" />
      </Ico>
      <Ico><Fx /></Ico>
    </div>
    {/* sidebar collapse handle */}
    <div className="absolute -left-px top-[268px] flex h-[50px] w-[5px] items-center justify-center bg-[#979797]">
      <svg width="3" height="5" viewBox="0 0 3 5"><path d="M0 0l3 2.500L0 5z" fill="#fff" /></svg>
    </div>
  </div>
);

const StatusBar = () => (
  <div className="flex h-[17px] shrink-0 items-center border-t border-[#d3d1cf] text-[8px] text-[#333]">
    <span className="flex w-[27px] items-center pl-[6px]">
      <svg width="12" height="12" viewBox="0 0 12 12" fill="none" stroke="#9a9a9a">
        <path d="M1 1h10v10H2.500L1 9.500zM3 1v4h6V1M4 11V8h4v3" />
      </svg>
    </span>
    <span className="w-[147.500px]">Sheet 2 of 3</span>
    <span className="w-[218.500px] border-l border-[#e3e2e0] pl-[6px]">Selected: 1 row, 8 columns</span>
    <span className="w-[216.500px] border-l border-[#e3e2e0] pl-[6px]">PageStyle_Özet Dashboard</span>
    <span className="w-[165.500px] border-l border-[#e3e2e0] text-center">English (USA)</span>
    <span className="h-3 w-[45.500px] border-l border-[#e3e2e0]" />
    <span className="flex h-3 w-[30.500px] items-center gap-[3px] border-l border-[#e3e2e0] pl-[6px]">
      <span className="h-[7px] w-3 border border-[#4ba3d3] bg-[#eef8fd]" />
      <svg width="5" height="12" viewBox="0 0 5 12" stroke="#333" fill="none"><path d="M0 .5h5M2.500 .5v11M0 11.500h5" /></svg>
    </span>
    <span className="h-3 w-5 border-l border-[#e3e2e0]" />
    <span className="h-3 w-5 border-l border-[#e3e2e0]" />
    <span className="w-[180px] border-l border-[#e3e2e0] pl-[2px] text-center">Average: ; Sum: 0</span>
    <span className="flex w-[96px] items-center border-l border-[#e3e2e0] pl-[4px]">
      <svg width="86" height="9" viewBox="0 0 86 9" fill="none" stroke="#222">
        <path d="M1 4.500h6.500M79 4.500h7M82.500 1v7" strokeWidth="1.500" />
        <path d="M11.500 4.500h65" stroke="#8f8f8f" />
        <rect x="42" y="1" width="2.500" height="7" fill="#fff" strokeWidth=".8" />
      </svg>
    </span>
    <span className="flex-1 pl-[5px]">100%</span>
  </div>
);

const App = () => (
  <div className="flex h-[675px] w-[1200px] flex-col overflow-hidden bg-[#f6f5f4] font-[Noto_Sans,sans-serif] text-[9px] leading-none text-[#2e3436]">
    <MenuBar />
    <StandardBar />
    <FormatBar />
    <div className="flex h-[587px] shrink-0">
      <div className="flex w-[1161px] flex-col">
        <FormulaBar />
        <Sheet />
        <div className="flex h-[10px] w-[1152px] shrink-0 items-center bg-[#cecece] pl-[2px]">
          <span className="h-[6px] w-[542px] rounded-full bg-[#7f8080]" />
          <span className="ml-auto mr-[2px] h-2 w-px bg-[#333]" />
        </div>
        <SheetTabs />
      </div>
      <Sidebar />
    </div>
    <StatusBar />
  </div>
);

export default App;
